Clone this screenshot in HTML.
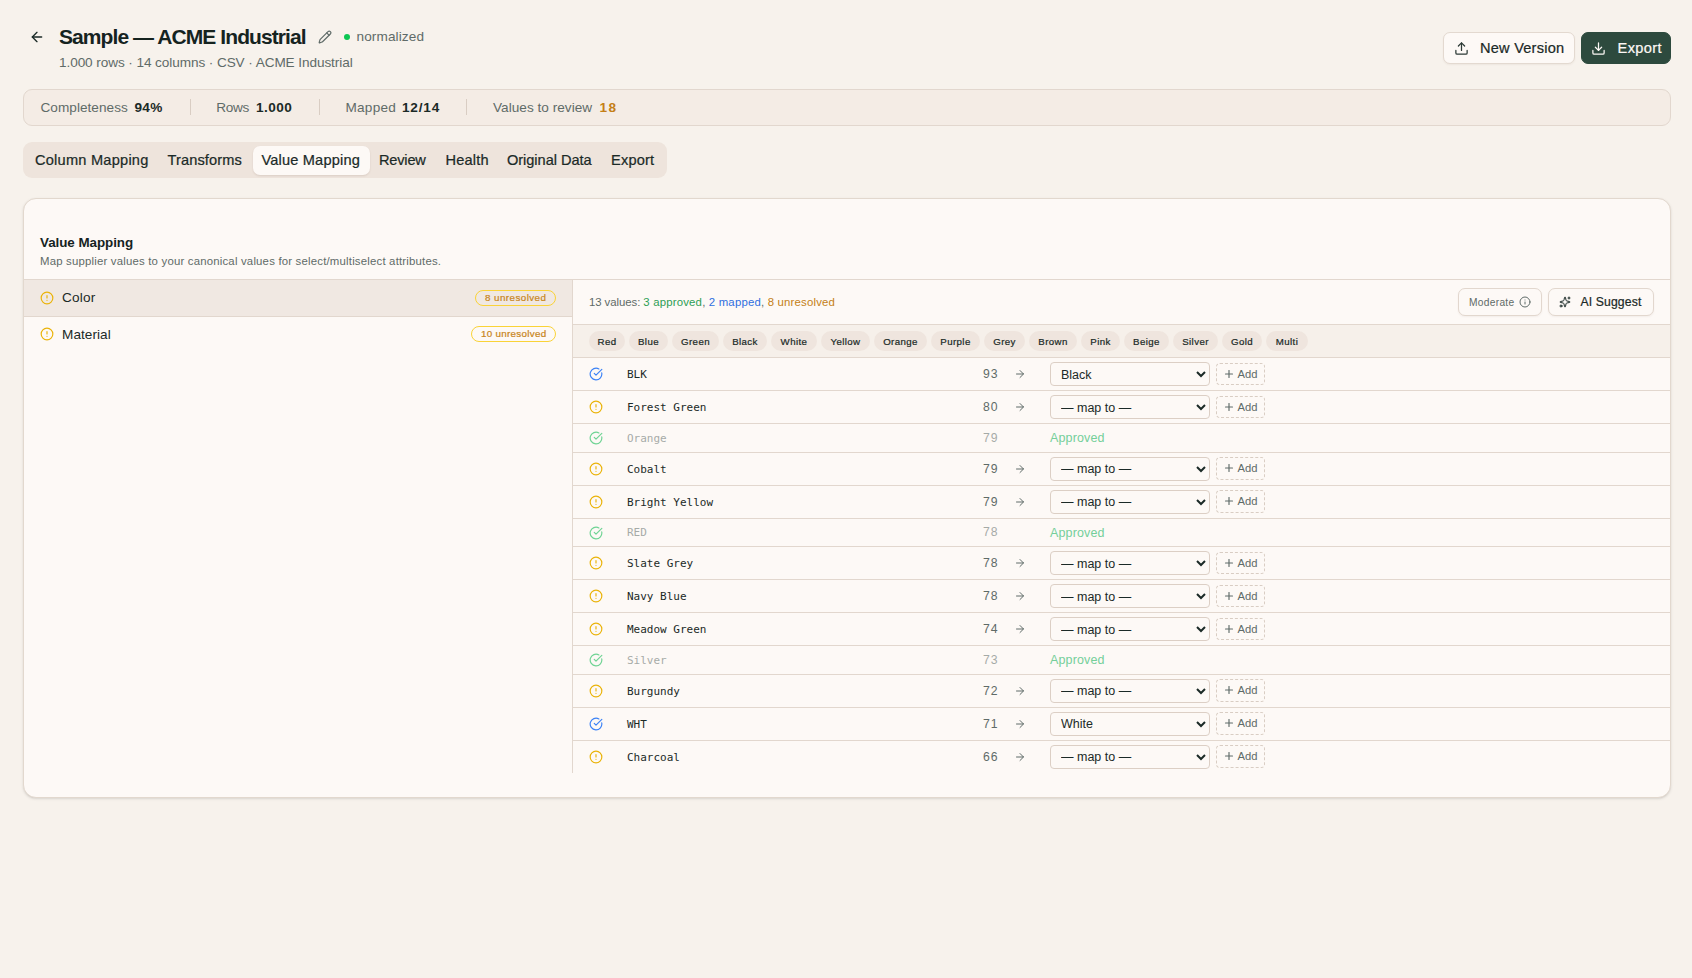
<!DOCTYPE html>
<html lang="en">
<head>
<meta charset="utf-8">
<title>Sample — ACME Industrial</title>
<style>
*{box-sizing:border-box;margin:0;padding:0}
html,body{width:1692px;height:978px;overflow:hidden}
body{background:#f7f2ec;font-family:"Liberation Sans",Arial,sans-serif;color:#1b2a27;position:relative}
.abs{position:absolute}
svg{display:block}
.t{position:absolute;white-space:nowrap;line-height:1}
.med{-webkit-text-stroke:.22px currentColor}
#title{left:59px;top:23.5px;font-size:21px;font-weight:700;color:#15231f;line-height:26px}
#sub{left:59px;top:55px;font-size:13.6px;color:#5f6b68;line-height:16px}
#norm{left:356.5px;top:29px;font-size:13.6px;color:#5f6b68;line-height:16px}
#dot{left:344px;top:34px;width:6px;height:6px;border-radius:50%;background:#0dc753}
.btn{position:absolute;top:32px;height:32px;border-radius:7px;font-size:14.6px;line-height:30px}
#bnv{left:1443px;width:132px;background:#fdf9f6;border:1px solid #e3d9d0;color:#1b2a27;box-shadow:0 1px 2px rgba(80,50,30,.06)}
#bex{left:1581px;width:90px;background:#2d4a3e;color:#fdf9f6;border:1px solid #2d4a3e}
#stats{left:23px;top:89px;width:1648px;height:37px;border:1px solid #e2d7ce;border-radius:9px;background:#f4ece5}
.st{font-size:13.6px;line-height:16px;top:100px;color:#5f6b68}
.sv{font-size:13.6px;line-height:16px;top:100px;color:#1b2a27;font-weight:700}
.sep{position:absolute;top:99px;width:1px;height:16px;background:#d9cdc3}
#tabs{left:23px;top:142px;width:643.6px;height:36px;border-radius:9px;background:#eee4dc}
.tab{top:152px;font-size:14.6px;line-height:16px;color:#1b2a27}
#tabact{left:253px;top:146px;width:117px;height:28.5px;border-radius:7px;background:#fdf9f6;box-shadow:0 1px 2px rgba(80,50,30,.12)}
#card{left:23px;top:198px;width:1648px;height:600px;border-radius:13px;background:#fdf9f6;border:1px solid #e2d8ce;box-shadow:0 1px 3px rgba(0,0,0,.1),0 1px 2px -1px rgba(0,0,0,.1)}
#h2{left:40px;top:235px;font-size:13.4px;font-weight:700;line-height:16px;color:#15231f}
#desc{left:40px;top:254px;font-size:11.4px;line-height:14px;color:#5f6b68}
.hl{position:absolute;height:1px;background:#e2d7ce}
.vl{position:absolute;width:1px;background:#e2d7ce}
.lab{font-size:13.6px;line-height:16px;color:#1b2a27}
.badge{height:16px;border:1px solid #fad338;border-radius:8px}
.badge span{font-size:9.8px;line-height:14px;top:0;color:#c8851c}
#sum{font-size:11.4px;line-height:14px;color:#5f6b68}
.sbtn{top:288px;height:28px;border:1px solid #e2d7ce;border-radius:7px;background:#fdf9f6;box-shadow:0 1px 2px rgba(80,50,30,.06)}
.chip{top:331px;height:20px;border-radius:10px;background:#efe5de;font-size:9.7px;letter-spacing:.4px;color:#1b2a27;text-align:center;line-height:21.4px;white-space:nowrap}
.mono{font-family:"DejaVu Sans Mono","Liberation Mono",monospace;font-size:11px;line-height:16px;color:#1b2a27}
.num{font-family:"Liberation Sans",Arial,sans-serif;font-size:12.2px;letter-spacing:.95px;text-align:right;color:#5f6b68}
.dim{opacity:.55;color:#5f6b68}
.appr{font-size:12.5px;line-height:16px;color:#74cf9a}
.sel{position:absolute;left:1050px;width:160px;height:24px;border:1px solid #dccfc5;border-radius:4px;background:#fdf9f6;font-family:"Liberation Sans",Arial,sans-serif;font-size:12.5px;color:#1b2a27;padding:2px 6px 0 6px}
.add{left:1216px;width:48.5px;height:22px;border:1px dashed #d9cdc3;border-radius:4px}
.add span{font-size:11.2px;color:#5f6b68;left:20.6px;top:0;line-height:20px}
</style>
</head>
<body>
<svg class="abs" style="left:29px;top:29px" width="16" height="16" viewBox="0 0 24 24" fill="none" stroke="#1b2a27" stroke-width="2" stroke-linecap="round" stroke-linejoin="round"><path d="M12 19l-7-7 7-7"/><path d="M19 12H5"/></svg>
<div class="t" id="title" style="letter-spacing:-0.920px">Sample — ACME Industrial</div>
<svg class="abs" style="left:318px;top:30px" width="14" height="14" viewBox="0 0 24 24" fill="none" stroke="#5f6b68" stroke-width="2" stroke-linecap="round" stroke-linejoin="round"><path d="M21.17 6.81a1 1 0 0 0-3.99-3.99L3.84 16.17a2 2 0 0 0-.5.83l-1.32 4.35a.5.5 0 0 0 .62.62l4.35-1.32a2 2 0 0 0 .83-.5z"/><path d="M15 5l4 4"/></svg>
<div class="abs" id="dot"></div>
<div class="t" id="norm" style="letter-spacing:0.111px">normalized</div>
<div class="t" id="sub" style="letter-spacing:-0.087px">1.000 rows · 14 columns · CSV · ACME Industrial</div>
<div class="btn" id="bnv"><svg class="abs" style="left:9.5px;top:7.5px" width="15" height="15" viewBox="0 0 24 24" fill="none" stroke="#2d3a36" stroke-width="2" stroke-linecap="round" stroke-linejoin="round"><path d="M12 3v12"/><path d="M17 8l-5-5-5 5"/><path d="M21 15v4a2 2 0 0 1-2 2H5a2 2 0 0 1-2-2v-4"/></svg><span class="t med" id="tnv" style="left:36px;top:0;line-height:30px;letter-spacing:0.220px">New Version</span></div>
<div class="btn" id="bex"><svg class="abs" style="left:8.5px;top:7.5px" width="15" height="15" viewBox="0 0 24 24" fill="none" stroke="#fdf9f6" stroke-width="2" stroke-linecap="round" stroke-linejoin="round"><path d="M12 15V3"/><path d="M7 10l5 5 5-5"/><path d="M21 15v4a2 2 0 0 1-2 2H5a2 2 0 0 1-2-2v-4"/></svg><span class="t med" id="tex" style="left:35.5px;top:0;line-height:30px;letter-spacing:0.400px">Export</span></div>
<div class="abs" id="stats"></div>
<div class="t st" id="st0" style="left:40.5px;letter-spacing:0.036px">Completeness</div>
<div class="t sv" id="sv0" style="left:134.5px;letter-spacing:0.300px">94%</div>
<div class="t st" id="st1" style="left:216.2px;letter-spacing:-0.333px">Rows</div>
<div class="t sv" id="sv1" style="left:256px;letter-spacing:0.450px">1.000</div>
<div class="t st" id="st2" style="left:345.5px;letter-spacing:0.240px">Mapped</div>
<div class="t sv" id="sv2" style="left:402px;letter-spacing:0.800px">12/14</div>
<div class="t st" id="st3" style="left:493px;letter-spacing:0.027px">Values to review</div>
<div class="t sv" id="sv3" style="left:599.5px;color:#c47f17;letter-spacing:1.400px">18</div>
<div class="sep" style="left:190px"></div>
<div class="sep" style="left:318.5px"></div>
<div class="sep" style="left:466px"></div>
<div class="abs" id="tabs"></div><div class="abs" id="tabact"></div>
<div class="t tab med" id="tab0" style="left:35px;letter-spacing:0.231px">Column Mapping</div>
<div class="t tab med" id="tab1" style="left:167.5px;letter-spacing:0.111px">Transforms</div>
<div class="t tab med" id="tab2" style="left:261.5px;letter-spacing:0.167px">Value Mapping</div>
<div class="t tab med" id="tab3" style="left:379px;letter-spacing:-0.200px">Review</div>
<div class="t tab med" id="tab4" style="left:445.5px;letter-spacing:0.200px">Health</div>
<div class="t tab med" id="tab5" style="left:507px;letter-spacing:-0.050px">Original Data</div>
<div class="t tab med" id="tab6" style="left:611px;letter-spacing:0.200px">Export</div>
<div class="abs" id="card"></div>
<div class="t" id="h2" style="letter-spacing:-0.050px">Value Mapping</div>
<div class="t" id="desc" style="letter-spacing:0.190px">Map supplier values to your canonical values for select/multiselect attributes.</div>
<div class="hl" style="left:24px;top:279px;width:1646px"></div>
<div class="abs" style="left:24px;top:280px;width:548px;height:36px;background:#f0e8e2"></div>
<div class="hl" style="left:24px;top:316px;width:548px"></div>
<svg class="abs" style="left:40px;top:291px" width="14" height="14" viewBox="0 0 24 24" fill="none" stroke="#eab308" stroke-width="2" stroke-linecap="round" stroke-linejoin="round"><circle cx="12" cy="12" r="10"/><path d="M12 8v4"/><path d="M12 16h.01"/></svg>
<div class="t lab" id="lab0" style="left:62px;top:290px;letter-spacing:0.200px">Color</div>
<div class="abs badge" style="left:475px;top:290px;width:81px"><span class="t med" id="bd0" style="left:9px;letter-spacing:0.440px">8 unresolved</span></div>
<svg class="abs" style="left:40px;top:327px" width="14" height="14" viewBox="0 0 24 24" fill="none" stroke="#eab308" stroke-width="2" stroke-linecap="round" stroke-linejoin="round"><circle cx="12" cy="12" r="10"/><path d="M12 8v4"/><path d="M12 16h.01"/></svg>
<div class="t lab" id="lab1" style="left:62px;top:327px;letter-spacing:0.057px">Material</div>
<div class="abs badge" style="left:471px;top:326px;width:85px"><span class="t med" id="bd1" style="left:9px;letter-spacing:0.300px">10 unresolved</span></div>
<div class="vl" style="left:572px;top:280px;height:492.5px"></div>
<div class="t" id="sum" style="left:589px;top:295px;letter-spacing:0.180px"><span style="letter-spacing:-.07px">13 values: </span><span style="color:#2e9e55">3 approved</span>, <span style="color:#2f6fe0">2 mapped</span>, <span style="color:#c47f17">8 unresolved</span></div>
<div class="abs sbtn" style="left:1458px;width:84px"><span class="t" id="mod" style="left:10px;top:0;line-height:27px;font-size:10.2px;color:#5f6b68;letter-spacing:0.300px">Moderate</span><svg class="abs" style="left:60px;top:7px" width="12" height="12" viewBox="0 0 24 24" fill="none" stroke="#5f6b68" stroke-width="2" stroke-linecap="round" stroke-linejoin="round"><circle cx="12" cy="12" r="10"/><path d="M12 16v-4"/><path d="M12 8h.01"/></svg></div>
<div class="abs sbtn" style="left:1548px;width:106px"><svg class="abs" style="left:10px;top:7px" width="12" height="12" viewBox="0 0 24 24" fill="none" stroke="#1b2a27" stroke-width="2" stroke-linecap="round" stroke-linejoin="round"><path d="M11.017 2.814a1 1 0 0 1 1.966 0l1.051 5.558a2 2 0 0 0 1.594 1.594l5.558 1.051a1 1 0 0 1 0 1.966l-5.558 1.051a2 2 0 0 0-1.594 1.594l-1.051 5.558a1 1 0 0 1-1.966 0l-1.051-5.558a2 2 0 0 0-1.594-1.594l-5.558-1.051a1 1 0 0 1 0-1.966l5.558-1.051a2 2 0 0 0 1.594-1.594z"/><path d="M20 2v4"/><path d="M22 4h-4"/><circle cx="4" cy="20" r="2"/></svg><span class="t med" id="ais" style="left:31.5px;top:0;line-height:26.4px;font-size:12.2px;color:#1b2a27;letter-spacing:0.130px">AI Suggest</span></div>
<div class="hl" style="left:573px;top:324px;width:1097px"></div>
<div class="abs" style="left:573px;top:325px;width:1097px;height:32px;background:#f6f0ea"></div>
<div class="hl" style="left:573px;top:357px;width:1097px"></div>
<div class="abs chip med" style="left:589px;width:36px"><span id="chip0" style="">Red</span></div>
<div class="abs chip med" style="left:629px;width:39px"><span id="chip1" style="">Blue</span></div>
<div class="abs chip med" style="left:672px;width:47px"><span id="chip2" style="">Green</span></div>
<div class="abs chip med" style="left:723px;width:44px"><span id="chip3" style="">Black</span></div>
<div class="abs chip med" style="left:771px;width:46px"><span id="chip4" style="">White</span></div>
<div class="abs chip med" style="left:821px;width:49px"><span id="chip5" style="">Yellow</span></div>
<div class="abs chip med" style="left:874px;width:53px"><span id="chip6" style="">Orange</span></div>
<div class="abs chip med" style="left:931px;width:49px"><span id="chip7" style="">Purple</span></div>
<div class="abs chip med" style="left:984px;width:41px"><span id="chip8" style="">Grey</span></div>
<div class="abs chip med" style="left:1029px;width:48px"><span id="chip9" style="">Brown</span></div>
<div class="abs chip med" style="left:1081px;width:39px"><span id="chip10" style="">Pink</span></div>
<div class="abs chip med" style="left:1124px;width:45px"><span id="chip11" style="">Beige</span></div>
<div class="abs chip med" style="left:1173px;width:45px"><span id="chip12" style="">Silver</span></div>
<div class="abs chip med" style="left:1222px;width:40px"><span id="chip13" style="">Gold</span></div>
<div class="abs chip med" style="left:1266px;width:42px"><span id="chip14" style="">Multi</span></div>
<div class="hl" style="left:573px;top:390px;width:1097px"></div>
<svg class="abs" style="left:589px;top:367px" width="14" height="14" viewBox="0 0 24 24" fill="none" stroke="#3b82f6" stroke-width="2" stroke-linecap="round" stroke-linejoin="round"><path d="M21.8 10A10 10 0 1 1 17 3.34"/><path d="M9 11l3 3L22 4"/></svg>
<div class="t mono" style="left:627px;top:367px">BLK</div>
<div class="t mono num" style="left:960px;width:38.5px;top:366px">93</div>
<svg class="abs" style="left:1014px;top:368px" width="12" height="12" viewBox="0 0 24 24" fill="none" stroke="#5f6b68" stroke-width="2" stroke-linecap="round" stroke-linejoin="round"><path d="M5 12h14"/><path d="M12 5l7 7-7 7"/></svg>
<select class="sel" style="top:362px"><option>Black</option></select>
<div class="abs add" style="top:363px"><svg class="abs" style="left:6px;top:4px" width="12" height="12" viewBox="0 0 24 24" fill="none" stroke="#5f6b68" stroke-width="2.3" stroke-linecap="round" stroke-linejoin="round"><path d="M5 12h14"/><path d="M12 5v14"/></svg><span class="t" style="">Add</span></div>
<div class="hl" style="left:573px;top:423px;width:1097px"></div>
<svg class="abs" style="left:589px;top:400px" width="14" height="14" viewBox="0 0 24 24" fill="none" stroke="#eab308" stroke-width="2" stroke-linecap="round" stroke-linejoin="round"><circle cx="12" cy="12" r="10"/><path d="M12 8v4"/><path d="M12 16h.01"/></svg>
<div class="t mono" style="left:627px;top:400px">Forest Green</div>
<div class="t mono num" style="left:960px;width:38.5px;top:399px">80</div>
<svg class="abs" style="left:1014px;top:401px" width="12" height="12" viewBox="0 0 24 24" fill="none" stroke="#5f6b68" stroke-width="2" stroke-linecap="round" stroke-linejoin="round"><path d="M5 12h14"/><path d="M12 5l7 7-7 7"/></svg>
<select class="sel" style="top:395px"><option>— map to —</option></select>
<div class="abs add" style="top:396px"><svg class="abs" style="left:6px;top:4px" width="12" height="12" viewBox="0 0 24 24" fill="none" stroke="#5f6b68" stroke-width="2.3" stroke-linecap="round" stroke-linejoin="round"><path d="M5 12h14"/><path d="M12 5v14"/></svg><span class="t" style="">Add</span></div>
<div class="hl" style="left:573px;top:452px;width:1097px"></div>
<svg class="abs" style="left:589px;top:431px;opacity:.8" width="14" height="14" viewBox="0 0 24 24" fill="none" stroke="#4ccb7c" stroke-width="2" stroke-linecap="round" stroke-linejoin="round"><path d="M21.8 10A10 10 0 1 1 17 3.34"/><path d="M9 11l3 3L22 4"/></svg>
<div class="t mono dim" style="left:627px;top:431px">Orange</div>
<div class="t mono num dim" style="left:960px;width:38.5px;top:430px">79</div>
<div class="t appr" id="ap2" style="left:1050px;top:430px;letter-spacing:0.130px">Approved</div>
<div class="hl" style="left:573px;top:485px;width:1097px"></div>
<svg class="abs" style="left:589px;top:462px" width="14" height="14" viewBox="0 0 24 24" fill="none" stroke="#eab308" stroke-width="2" stroke-linecap="round" stroke-linejoin="round"><circle cx="12" cy="12" r="10"/><path d="M12 8v4"/><path d="M12 16h.01"/></svg>
<div class="t mono" style="left:627px;top:462px">Cobalt</div>
<div class="t mono num" style="left:960px;width:38.5px;top:461px">79</div>
<svg class="abs" style="left:1014px;top:463px" width="12" height="12" viewBox="0 0 24 24" fill="none" stroke="#5f6b68" stroke-width="2" stroke-linecap="round" stroke-linejoin="round"><path d="M5 12h14"/><path d="M12 5l7 7-7 7"/></svg>
<select class="sel" style="top:457px;padding-top:0"><option>— map to —</option></select>
<div class="abs add" style="top:457px;height:23px"><svg class="abs" style="left:6px;top:4px" width="12" height="12" viewBox="0 0 24 24" fill="none" stroke="#5f6b68" stroke-width="2.3" stroke-linecap="round" stroke-linejoin="round"><path d="M5 12h14"/><path d="M12 5v14"/></svg><span class="t" style="">Add</span></div>
<div class="hl" style="left:573px;top:518px;width:1097px"></div>
<svg class="abs" style="left:589px;top:495px" width="14" height="14" viewBox="0 0 24 24" fill="none" stroke="#eab308" stroke-width="2" stroke-linecap="round" stroke-linejoin="round"><circle cx="12" cy="12" r="10"/><path d="M12 8v4"/><path d="M12 16h.01"/></svg>
<div class="t mono" style="left:627px;top:495px">Bright Yellow</div>
<div class="t mono num" style="left:960px;width:38.5px;top:494px">79</div>
<svg class="abs" style="left:1014px;top:496px" width="12" height="12" viewBox="0 0 24 24" fill="none" stroke="#5f6b68" stroke-width="2" stroke-linecap="round" stroke-linejoin="round"><path d="M5 12h14"/><path d="M12 5l7 7-7 7"/></svg>
<select class="sel" style="top:490px;padding-top:0"><option>— map to —</option></select>
<div class="abs add" style="top:490px;height:23px"><svg class="abs" style="left:6px;top:4px" width="12" height="12" viewBox="0 0 24 24" fill="none" stroke="#5f6b68" stroke-width="2.3" stroke-linecap="round" stroke-linejoin="round"><path d="M5 12h14"/><path d="M12 5v14"/></svg><span class="t" style="">Add</span></div>
<div class="hl" style="left:573px;top:546px;width:1097px"></div>
<svg class="abs" style="left:589px;top:526px;opacity:.8" width="14" height="14" viewBox="0 0 24 24" fill="none" stroke="#4ccb7c" stroke-width="2" stroke-linecap="round" stroke-linejoin="round"><path d="M21.8 10A10 10 0 1 1 17 3.34"/><path d="M9 11l3 3L22 4"/></svg>
<div class="t mono dim" style="left:627px;top:525px">RED</div>
<div class="t mono num dim" style="left:960px;width:38.5px;top:524px">78</div>
<div class="t appr" id="ap5" style="left:1050px;top:525px;letter-spacing:0.130px">Approved</div>
<div class="hl" style="left:573px;top:579px;width:1097px"></div>
<svg class="abs" style="left:589px;top:556px" width="14" height="14" viewBox="0 0 24 24" fill="none" stroke="#eab308" stroke-width="2" stroke-linecap="round" stroke-linejoin="round"><circle cx="12" cy="12" r="10"/><path d="M12 8v4"/><path d="M12 16h.01"/></svg>
<div class="t mono" style="left:627px;top:556px">Slate Grey</div>
<div class="t mono num" style="left:960px;width:38.5px;top:555px">78</div>
<svg class="abs" style="left:1014px;top:557px" width="12" height="12" viewBox="0 0 24 24" fill="none" stroke="#5f6b68" stroke-width="2" stroke-linecap="round" stroke-linejoin="round"><path d="M5 12h14"/><path d="M12 5l7 7-7 7"/></svg>
<select class="sel" style="top:551px"><option>— map to —</option></select>
<div class="abs add" style="top:552px"><svg class="abs" style="left:6px;top:4px" width="12" height="12" viewBox="0 0 24 24" fill="none" stroke="#5f6b68" stroke-width="2.3" stroke-linecap="round" stroke-linejoin="round"><path d="M5 12h14"/><path d="M12 5v14"/></svg><span class="t" style="">Add</span></div>
<div class="hl" style="left:573px;top:612px;width:1097px"></div>
<svg class="abs" style="left:589px;top:589px" width="14" height="14" viewBox="0 0 24 24" fill="none" stroke="#eab308" stroke-width="2" stroke-linecap="round" stroke-linejoin="round"><circle cx="12" cy="12" r="10"/><path d="M12 8v4"/><path d="M12 16h.01"/></svg>
<div class="t mono" style="left:627px;top:589px">Navy Blue</div>
<div class="t mono num" style="left:960px;width:38.5px;top:588px">78</div>
<svg class="abs" style="left:1014px;top:590px" width="12" height="12" viewBox="0 0 24 24" fill="none" stroke="#5f6b68" stroke-width="2" stroke-linecap="round" stroke-linejoin="round"><path d="M5 12h14"/><path d="M12 5l7 7-7 7"/></svg>
<select class="sel" style="top:584px"><option>— map to —</option></select>
<div class="abs add" style="top:585px"><svg class="abs" style="left:6px;top:4px" width="12" height="12" viewBox="0 0 24 24" fill="none" stroke="#5f6b68" stroke-width="2.3" stroke-linecap="round" stroke-linejoin="round"><path d="M5 12h14"/><path d="M12 5v14"/></svg><span class="t" style="">Add</span></div>
<div class="hl" style="left:573px;top:645px;width:1097px"></div>
<svg class="abs" style="left:589px;top:622px" width="14" height="14" viewBox="0 0 24 24" fill="none" stroke="#eab308" stroke-width="2" stroke-linecap="round" stroke-linejoin="round"><circle cx="12" cy="12" r="10"/><path d="M12 8v4"/><path d="M12 16h.01"/></svg>
<div class="t mono" style="left:627px;top:622px">Meadow Green</div>
<div class="t mono num" style="left:960px;width:38.5px;top:621px">74</div>
<svg class="abs" style="left:1014px;top:623px" width="12" height="12" viewBox="0 0 24 24" fill="none" stroke="#5f6b68" stroke-width="2" stroke-linecap="round" stroke-linejoin="round"><path d="M5 12h14"/><path d="M12 5l7 7-7 7"/></svg>
<select class="sel" style="top:617px"><option>— map to —</option></select>
<div class="abs add" style="top:618px"><svg class="abs" style="left:6px;top:4px" width="12" height="12" viewBox="0 0 24 24" fill="none" stroke="#5f6b68" stroke-width="2.3" stroke-linecap="round" stroke-linejoin="round"><path d="M5 12h14"/><path d="M12 5v14"/></svg><span class="t" style="">Add</span></div>
<div class="hl" style="left:573px;top:674px;width:1097px"></div>
<svg class="abs" style="left:589px;top:653px;opacity:.8" width="14" height="14" viewBox="0 0 24 24" fill="none" stroke="#4ccb7c" stroke-width="2" stroke-linecap="round" stroke-linejoin="round"><path d="M21.8 10A10 10 0 1 1 17 3.34"/><path d="M9 11l3 3L22 4"/></svg>
<div class="t mono dim" style="left:627px;top:653px">Silver</div>
<div class="t mono num dim" style="left:960px;width:38.5px;top:652px">73</div>
<div class="t appr" id="ap9" style="left:1050px;top:652px;letter-spacing:0.130px">Approved</div>
<div class="hl" style="left:573px;top:707px;width:1097px"></div>
<svg class="abs" style="left:589px;top:684px" width="14" height="14" viewBox="0 0 24 24" fill="none" stroke="#eab308" stroke-width="2" stroke-linecap="round" stroke-linejoin="round"><circle cx="12" cy="12" r="10"/><path d="M12 8v4"/><path d="M12 16h.01"/></svg>
<div class="t mono" style="left:627px;top:684px">Burgundy</div>
<div class="t mono num" style="left:960px;width:38.5px;top:683px">72</div>
<svg class="abs" style="left:1014px;top:685px" width="12" height="12" viewBox="0 0 24 24" fill="none" stroke="#5f6b68" stroke-width="2" stroke-linecap="round" stroke-linejoin="round"><path d="M5 12h14"/><path d="M12 5l7 7-7 7"/></svg>
<select class="sel" style="top:679px;padding-top:0"><option>— map to —</option></select>
<div class="abs add" style="top:679px;height:23px"><svg class="abs" style="left:6px;top:4px" width="12" height="12" viewBox="0 0 24 24" fill="none" stroke="#5f6b68" stroke-width="2.3" stroke-linecap="round" stroke-linejoin="round"><path d="M5 12h14"/><path d="M12 5v14"/></svg><span class="t" style="">Add</span></div>
<div class="hl" style="left:573px;top:740px;width:1097px"></div>
<svg class="abs" style="left:589px;top:717px" width="14" height="14" viewBox="0 0 24 24" fill="none" stroke="#3b82f6" stroke-width="2" stroke-linecap="round" stroke-linejoin="round"><path d="M21.8 10A10 10 0 1 1 17 3.34"/><path d="M9 11l3 3L22 4"/></svg>
<div class="t mono" style="left:627px;top:717px">WHT</div>
<div class="t mono num" style="left:960px;width:38.5px;top:716px">71</div>
<svg class="abs" style="left:1014px;top:718px" width="12" height="12" viewBox="0 0 24 24" fill="none" stroke="#5f6b68" stroke-width="2" stroke-linecap="round" stroke-linejoin="round"><path d="M5 12h14"/><path d="M12 5l7 7-7 7"/></svg>
<select class="sel" style="top:712px;padding-top:0"><option>White</option></select>
<div class="abs add" style="top:712px;height:23px"><svg class="abs" style="left:6px;top:4px" width="12" height="12" viewBox="0 0 24 24" fill="none" stroke="#5f6b68" stroke-width="2.3" stroke-linecap="round" stroke-linejoin="round"><path d="M5 12h14"/><path d="M12 5v14"/></svg><span class="t" style="">Add</span></div>
<svg class="abs" style="left:589px;top:750px" width="14" height="14" viewBox="0 0 24 24" fill="none" stroke="#eab308" stroke-width="2" stroke-linecap="round" stroke-linejoin="round"><circle cx="12" cy="12" r="10"/><path d="M12 8v4"/><path d="M12 16h.01"/></svg>
<div class="t mono" style="left:627px;top:750px">Charcoal</div>
<div class="t mono num" style="left:960px;width:38.5px;top:749px">66</div>
<svg class="abs" style="left:1014px;top:751px" width="12" height="12" viewBox="0 0 24 24" fill="none" stroke="#5f6b68" stroke-width="2" stroke-linecap="round" stroke-linejoin="round"><path d="M5 12h14"/><path d="M12 5l7 7-7 7"/></svg>
<select class="sel" style="top:745px;padding-top:0"><option>— map to —</option></select>
<div class="abs add" style="top:745px;height:23px"><svg class="abs" style="left:6px;top:4px" width="12" height="12" viewBox="0 0 24 24" fill="none" stroke="#5f6b68" stroke-width="2.3" stroke-linecap="round" stroke-linejoin="round"><path d="M5 12h14"/><path d="M12 5v14"/></svg><span class="t" style="">Add</span></div>
</body>
</html>
